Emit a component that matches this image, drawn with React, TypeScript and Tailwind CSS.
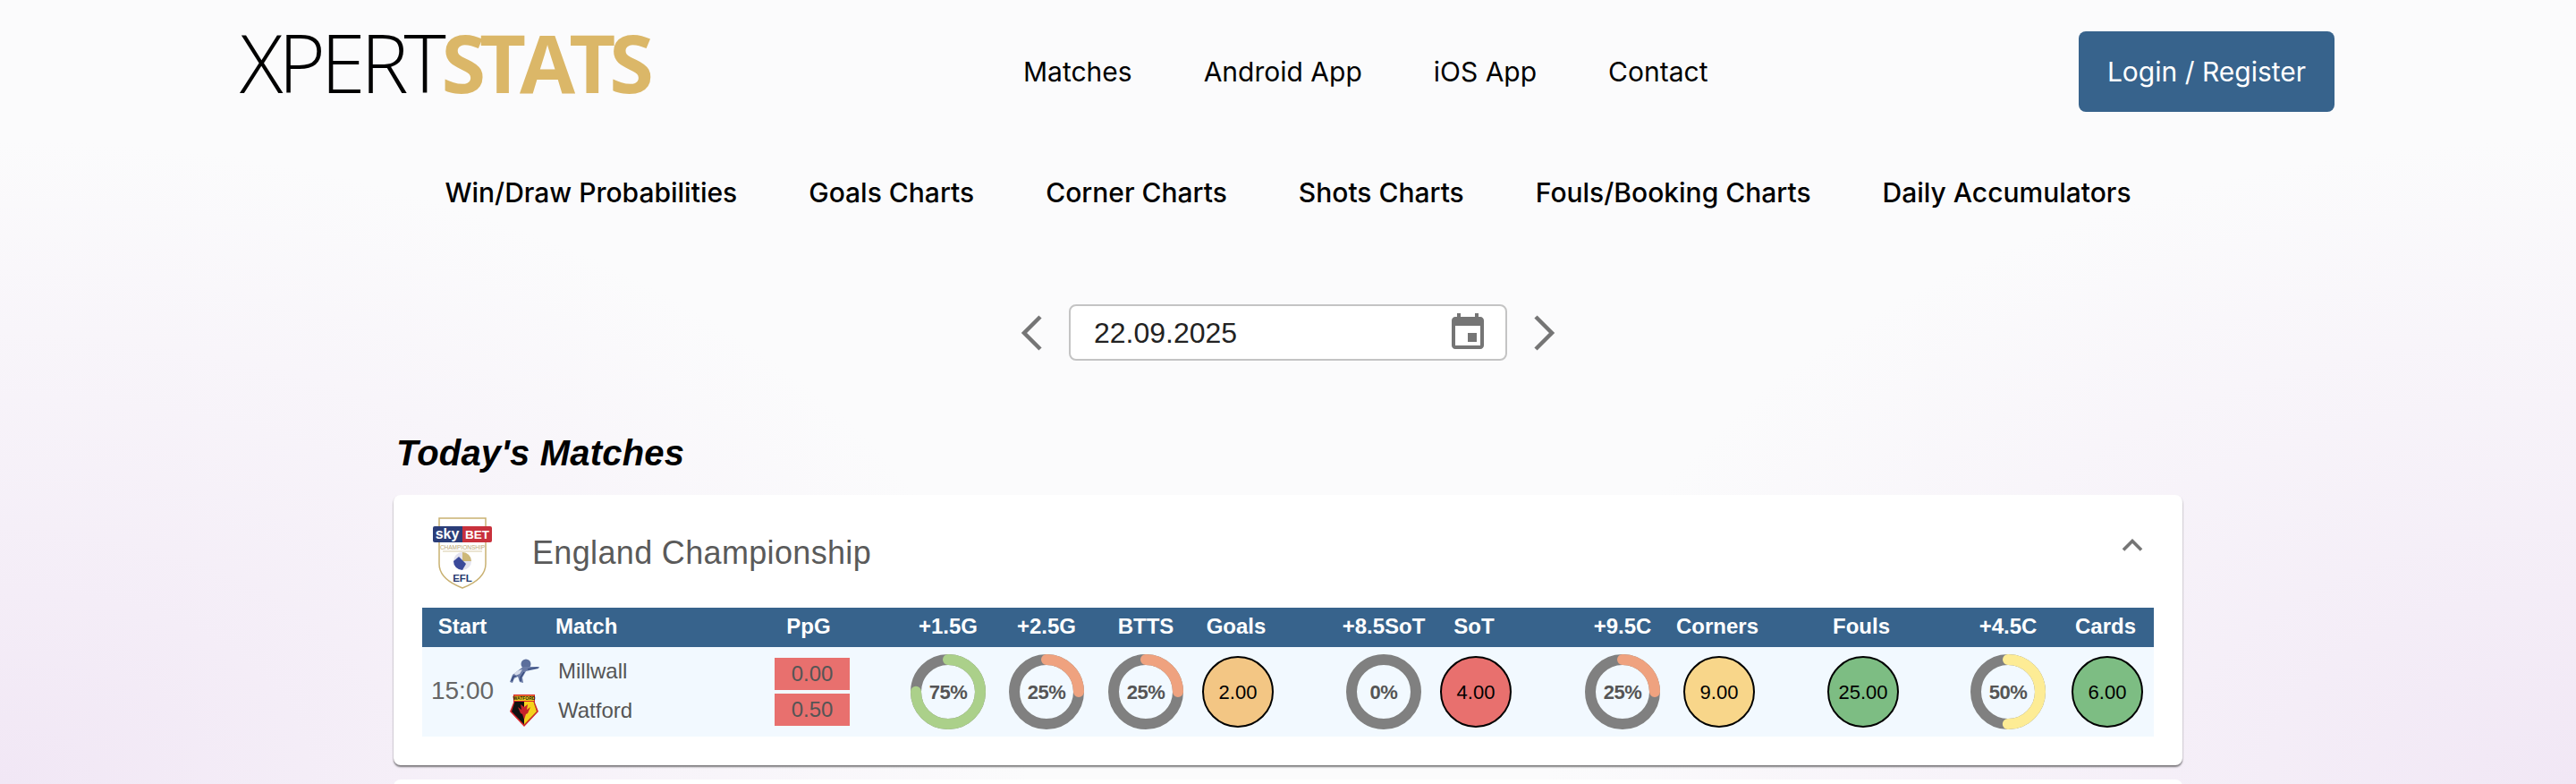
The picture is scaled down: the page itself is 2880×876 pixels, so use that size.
const sans = "font-['Liberation_Sans',Arial,sans-serif]";

const topLinks = ["Matches", "Android App", "iOS App", "Contact"];
const chartLinks = [
  "Win/Draw Probabilities",
  "Goals Charts",
  "Corner Charts",
  "Shots Charts",
  "Fouls/Booking Charts",
  "Daily Accumulators",
];

type Stat =
  | { label: string; col: string; kind: "ring"; pct: number; color: string }
  | { label: string; col: string; kind: "value"; value: string; bg: string };

const stats: Stat[] = [
  { label: "+1.5G", col: "ml-[55px] w-[110px]", kind: "ring", pct: 75, color: "#abd08a" },
  { label: "+2.5G", col: "w-[110px]", kind: "ring", pct: 25, color: "#efa27f" },
  { label: "BTTS", col: "w-[112px]", kind: "ring", pct: 25, color: "#efa27f" },
  { label: "Goals", col: "w-[90px]", kind: "value", value: "2.00", bg: "bg-[#f3c684]" },
  { label: "+8.5SoT", col: "ml-[70px] w-[100px]", kind: "ring", pct: 0, color: "#efa27f" },
  { label: "SoT", col: "w-[102px]", kind: "value", value: "4.00", bg: "bg-[#e8706e]" },
  { label: "+9.5C", col: "ml-[65px] w-[100px]", kind: "ring", pct: 25, color: "#efa27f" },
  { label: "Corners", col: "w-[112px]", kind: "value", value: "9.00", bg: "bg-[#f8d68a]" },
  { label: "Fouls", col: "ml-[50px] w-[110px]", kind: "value", value: "25.00", bg: "bg-[#7dbd83]" },
  { label: "+4.5C", col: "ml-[54px] w-[110px]", kind: "ring", pct: 50, color: "#fdec95" },
  { label: "Cards", col: "w-[108px]", kind: "value", value: "6.00", bg: "bg-[#7dbd83]" },
];

function Ring({ pct, color }: { pct: number; color: string }) {
  const r = 36;
  const len = 2 * Math.PI * r;
  return (
    <div className="relative flex h-[84px] w-[84px] items-center justify-center">
      <svg viewBox="0 0 84 84" className="absolute inset-0 -rotate-90">
        <circle cx="42" cy="42" r={r} fill="none" stroke="#808080" strokeWidth="12" />
        {pct > 0 && (
          <circle
            cx="42"
            cy="42"
            r={r}
            fill="none"
            stroke={color}
            strokeWidth="12"
            strokeLinecap="round"
            strokeDasharray={`${(len * pct) / 100} ${len}`}
          />
        )}
      </svg>
      <span className="relative text-[22px] font-bold tracking-[-0.5px] text-[#555]">{pct}%</span>
    </div>
  );
}

function EflLogo() {
  return (
    <svg viewBox="0 0 66 80" className="h-[80px] w-[66px]">
      <path
        d="M7 1H59V52C59 66 46 74 33 79C20 74 7 66 7 52Z"
        fill="#fff"
        stroke="#c9b172"
        strokeWidth="1.5"
      />
      <path d="M2 10H33V28H2Q0 28 0 26V12Q0 10 2 10Z" fill="#2b3d78" />
      <path d="M33 10H64Q66 10 66 12V26Q66 28 64 28H33Z" fill="#c8313c" />
      <text x="16" y="24" textAnchor="middle" fontSize="16" fontWeight="700" fill="#fff" fontFamily="Liberation Sans">
        sky
      </text>
      <text x="49.5" y="24" textAnchor="middle" fontSize="13.5" fontWeight="700" fill="#fff" fontFamily="Liberation Sans">
        BET
      </text>
      <text x="33" y="35.5" textAnchor="middle" fontSize="6.5" fill="#b9a470" fontFamily="Liberation Sans">
        CHAMPIONSHIP
      </text>
      <line x1="11" y1="38" x2="55" y2="38" stroke="#d8cba6" strokeWidth="1" />
      <circle cx="33" cy="49" r="10" fill="#e3e2ee" />
      <path d="M33 39A10 10 0 0 1 43 49L33 49Z" fill="#cdb878" />
      <path d="M23 49A10 10 0 0 0 33 59L37 52L29 44Z" fill="#3b4a9a" />
      <text x="33" y="72" textAnchor="middle" fontSize="11.5" fontWeight="700" fill="#27396f" fontFamily="Liberation Sans">
        EFL
      </text>
    </svg>
  );
}

function MillwallCrest() {
  return (
    <svg viewBox="0 0 36 30" className="h-[30px] w-[36px]">
      <circle cx="20" cy="7" r="5.5" fill="#5c6f9c" />
      <path
        d="M17 10C12 13 8 17 5 19L2 27L5 28L7 23L11 21L13 27L17 28L16 22L20 15L34 12L35 10L24 10Z"
        fill="#6a7ba6"
      />
      <path d="M7 17L12 14L16 13L13 18L8 20Z" fill="#d5dbe9" />
      <path d="M4 26L6 21L9 20M14 26L14 22L18 16M22 13L33 11" fill="none" stroke="#2f4479" strokeWidth="1.2" />
    </svg>
  );
}

function WatfordCrest() {
  return (
    <svg viewBox="0 0 32 36" className="h-[36px] w-[32px]">
      <path d="M4 0H28V9L32 19L16 36L0 19L4 9Z" fill="#d8262c" />
      <path d="M5.5 8H26.5L30 19L16 33.5L2 19Z" fill="#111" />
      <path d="M16 8H26.5L30 19L16 33.5Z" fill="#f6d21c" />
      <rect x="5" y="1.5" width="22" height="5.5" fill="#f6d21c" />
      <text x="16" y="6" textAnchor="middle" fontSize="5" fontWeight="700" fill="#111" fontFamily="Liberation Sans">
        WATFORD
      </text>
      <path d="M16 14L12 11L13 17L9 14L12 21L14 22L16 28L18 22L20 21L23 14L19 17L20 11Z" fill="#c8242b" />
    </svg>
  );
}

function MatchCard() {
  return (
    <div className="h-[302px] rounded-lg bg-white shadow-[0_2px_2px_rgba(0,0,0,0.5)]">
      <div className="flex h-[126px] items-center pl-[44px] pr-[44px] pt-[4px]">
        <EflLogo />
        <h2 className="ml-[45px] text-[36px] tracking-[0.34px] text-[#5a5a5a]">England Championship</h2>
        <svg viewBox="0 0 24 14" className="mb-[18px] ml-auto h-[14px] w-[24px]">
          <path d="M2 12.5L12 2.5L22 12.5" fill="none" stroke="#757575" strokeWidth="3.6" />
        </svg>
      </div>

      <div className="mx-[32px]">
        <div className="flex h-[44px] items-center bg-[#37638c] pb-[2px] text-center text-[24px] font-bold text-white">
          <div className="w-[90px]">Start</div>
          <div className="w-[296px] pl-[59px] text-left">Match</div>
          <div className="w-[92px]">PpG</div>
          {stats.map((s) => (
            <div key={s.label} className={s.col}>
              {s.label}
            </div>
          ))}
        </div>

        <div className="flex h-[100px] items-center bg-[#f2f9ff] text-[#555]">
          <div className="mb-[2px] w-[90px] text-center text-[28px] text-[#666]">15:00</div>
          <div className="mb-[3px] flex w-[296px] flex-col gap-[8px] pl-[6px] text-[24px]">
            <div className="flex h-[36px] items-center">
              <MillwallCrest />
              <span className="ml-[20px]">Millwall</span>
            </div>
            <div className="flex h-[36px] items-center">
              <div className="flex w-[36px] justify-center">
                <WatfordCrest />
              </div>
              <span className="ml-[20px]">Watford</span>
            </div>
          </div>
          <div className="flex w-[92px] flex-col gap-[4px] pl-[8px] text-center text-[24px]">
            <div className="h-[36px] bg-[#e8706e] leading-[36px]">0.00</div>
            <div className="h-[36px] bg-[#e8706e] leading-[36px]">0.50</div>
          </div>
          {stats.map((s) => (
            <div key={s.label} className={`${s.col} flex justify-center`}>
              {s.kind === "ring" ? (
                <Ring pct={s.pct} color={s.color} />
              ) : (
                <div
                  className={`ml-[4px] flex h-[80px] w-[80px] items-center justify-center rounded-full border-2 border-black text-[22px] text-black ${s.bg}`}
                >
                  {s.value}
                </div>
              )}
            </div>
          ))}
        </div>
      </div>
    </div>
  );
}

export default function App() {
  return (
    <div
      className={`${sans} h-[876px] overflow-hidden bg-[#fbfbfc] bg-[radial-gradient(ellipse_1150px_720px_at_0%_100%,#f1e7f5_0%,rgba(241,231,245,0)_100%),radial-gradient(ellipse_1150px_720px_at_100%_100%,#f1e7f5_0%,rgba(241,231,245,0)_100%)]`}
    >
      {/* Top nav */}
      <header className="flex h-[160px] items-start font-['Inter',sans-serif] text-[30px] text-black">
        <div className="ml-[268px] mt-[14px] flex h-[110px] w-[876px] items-center font-['Open_Sans',sans-serif] text-[90px] leading-none">
          <span className="font-light tracking-[-5.2px]">XPERT</span>
          <span className="font-bold tracking-[-7px] text-[#dbb768]">STATS</span>
        </div>
        <nav className="mt-[60px] flex gap-[80px] whitespace-nowrap leading-[40px]">
          {topLinks.map((l) => (
            <a key={l}>{l}</a>
          ))}
        </nav>
        <button className="ml-auto mr-[270px] mt-[35px] h-[90px] w-[286px] rounded-lg bg-[#37638c] text-white">
          Login / Register
        </button>
      </header>

      <nav className="flex h-[110px] justify-center gap-[80px] pt-[35px] font-['Inter',sans-serif] text-[30px] font-medium leading-[40px] text-black">
        {chartLinks.map((l) => (
          <a key={l}>{l}</a>
        ))}
      </nav>

      {/* Date picker */}
      <div className="mt-[70px] flex h-[63px] items-center justify-center gap-[30px]">
        <svg viewBox="0 0 24 40" className="h-[40px] w-[24px]">
          <path d="M22 2L4 20L22 38" fill="none" stroke="#757575" strokeWidth="4.5" />
        </svg>
        <div className="flex h-[63px] w-[490px] items-center justify-between rounded-lg border-2 border-[#c4c4c4] bg-white pl-[26px] pr-[18px] text-[32px] text-[#222]">
          22.09.2025
          <svg viewBox="0 0 24 24" className="h-[48px] w-[48px] fill-[#757575]">
            <path d="M17 12h-5v5h5v-5zM16 1v2H8V1H6v2H5c-1.11 0-1.99.9-1.99 2L3 19c0 1.1.89 2 2 2h14c1.1 0 2-.9 2-2V5c0-1.1-.9-2-2-2h-1V1h-2zm3 18H5V8h14v11z" />
          </svg>
        </div>
        <svg viewBox="0 0 24 40" className="h-[40px] w-[24px]">
          <path d="M2 2L20 20L2 38" fill="none" stroke="#757575" strokeWidth="4.5" />
        </svg>
      </div>

      {/* Matches */}
      <main className="mx-[440px]">
        <h1 className="mb-[24px] mt-[80px] pl-[3px] text-[40px] font-bold italic leading-[46px] tracking-[0.2px] text-black">
          Today's Matches
        </h1>
        <MatchCard />
        <div className="mt-[16px] h-[60px] rounded-t-lg bg-white" />
      </main>
    </div>
  );
}
